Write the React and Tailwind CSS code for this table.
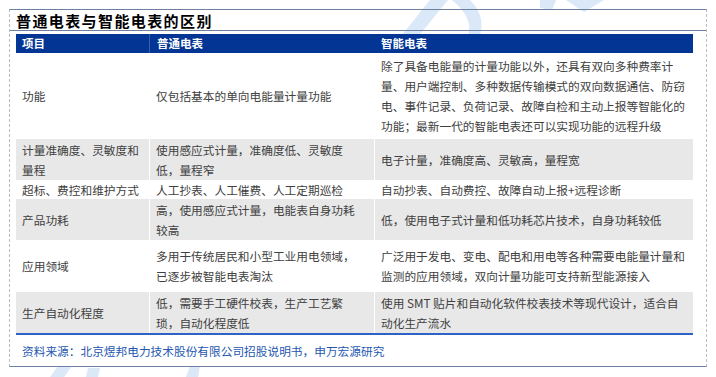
import React from "react";

const rows = [
  {
    h: "h-[86px]",
    bg: "bg-white",
    c1: ["功能"],
    c2: ["仅包括基本的单向电能量计量功能"],
    c3: [
      "除了具备电能量的计量功能以外，还具有双向多种费率计",
      "量、用户端控制、多种数据传输模式的双向数据通信、防窃",
      "电、事件记录、负荷记录、故障自检和主动上报等智能化的",
      "功能；最新一代的智能电表还可以实现功能的远程升级",
    ],
  },
  {
    h: "h-[41px]",
    bg: "bg-[#e8e8e8]",
    c1: ["计量准确度、灵敏度和", "量程"],
    c2: ["使用感应式计量，准确度低、灵敏度", "低，量程窄"],
    c3: ["电子计量，准确度高、灵敏高，量程宽"],
  },
  {
    h: "h-[19px]",
    bg: "bg-white",
    c1: ["超标、费控和维护方式"],
    c2: ["人工抄表、人工催费、人工定期巡检"],
    c3: ["自动抄表、自动费控、故障自动上报+远程诊断"],
  },
  {
    h: "h-[41px]",
    bg: "bg-[#e8e8e8]",
    c1: ["产品功耗"],
    c2: ["高，使用感应式计量，电能表自身功耗", "较高"],
    c3: ["低，使用电子式计量和低功耗芯片技术，自身功耗较低"],
  },
  {
    h: "h-[52px]",
    bg: "bg-white",
    c1: ["应用领域"],
    c2: ["多用于传统居民和小型工业用电领域，", "已逐步被智能电表淘汰"],
    c3: [
      "广泛用于发电、变电、配电和用电等各种需要电能量计量和",
      "监测的应用领域，双向计量功能可支持新型能源接入",
    ],
  },
  {
    h: "h-[41px]",
    bg: "bg-[#e8e8e8]",
    c1: ["生产自动化程度"],
    c2: ["低，需要手工硬件校表，生产工艺繁", "琐，自动化程度低"],
    c3: ["使用 SMT 贴片和自动化软件校表技术等现代设计，适合自", "动化生产流水"],
  },
];

function Cell({ lines, w, last }) {
  return (
    <div
      className={`${w} flex flex-col justify-center pl-[6px] ${last ? "" : "border-r border-white"}`}
    >
      {lines.map((l, i) => (
        <span key={i} className="whitespace-nowrap leading-[20px]">
          {l}
        </span>
      ))}
    </div>
  );
}

export default function App() {
  return (
    <div
      className="relative w-[716px] h-[377px] bg-white overflow-hidden"
      style={{ fontFamily: '"Noto Sans CJK SC", "Noto Sans", sans-serif' }}
    >
      {/* watermark */}
      <svg
        className="absolute left-0 top-0 pointer-events-none"
        width="716"
        height="377"
        viewBox="0 0 716 377"
      >
        <g fill="#dae8f7">
          <path d="M398 40 L430 0 L448 0 L412 44 Z" />
          <path d="M452 0 L470 0 Q488 18 478 40 L468 36 Q474 18 452 0 Z" />
          <path d="M540 0 L556 0 L552 10 L540 8 Z" />
          <path d="M566 0 L604 0 L584 12 Z" />
          <path d="M50 377 L58 366 L72 366 L64 377 Z" />
          <path d="M86 377 L88 368 L100 368 L98 377 Z" />
          <path d="M186 377 L190 366 L200 366 L198 377 Z" />
        </g>
      </svg>

      <div className="relative ml-[9px] mt-[9px] w-[698px] h-[358px] border-t border-b border-t-[#6d80a0] border-b-[#6d80a0] border-l border-r border-dashed border-l-[#bdbdbd] border-r-[#bdbdbd] [border-top-style:solid] [border-bottom-style:solid] flex flex-col">
        <div className="h-[21px] border-b border-[#6d80a0] flex items-center pl-[6px]">
          <span className="text-[15px] font-bold text-black tracking-[1.4px] leading-none">
            普通电表与智能电表的区别
          </span>
        </div>

        <div className="mt-[3px] ml-[6px] w-[677px] text-[11.7px] text-[#404040]">
          <div className="h-[19px] bg-[#033595] flex text-white font-bold text-[11.5px]">
            <div className="w-[134px] pl-[6px] flex items-center border-r border-[#3a5faa]">项目</div>
            <div className="w-[225px] pl-[7px] flex items-center">普通电表</div>
            <div className="w-[318px] pl-[6px] flex items-center">智能电表</div>
          </div>
          {rows.map((r, i) => (
            <div key={i} className={`${r.h} ${r.bg} flex`}>
              <Cell lines={r.c1} w="w-[134px]" />
              <Cell lines={r.c2} w="w-[225px]" />
              <Cell lines={r.c3} w="w-[318px]" last />
            </div>
          ))}
          <div className="h-[2px] bg-[#2f62c4]" />
        </div>

        <div className="flex-1 flex items-center pl-[12px] text-[11.7px] text-[#2457b0]">
          资料来源：北京煜邦电力技术股份有限公司招股说明书，申万宏源研究
        </div>
      </div>
    </div>
  );
}
